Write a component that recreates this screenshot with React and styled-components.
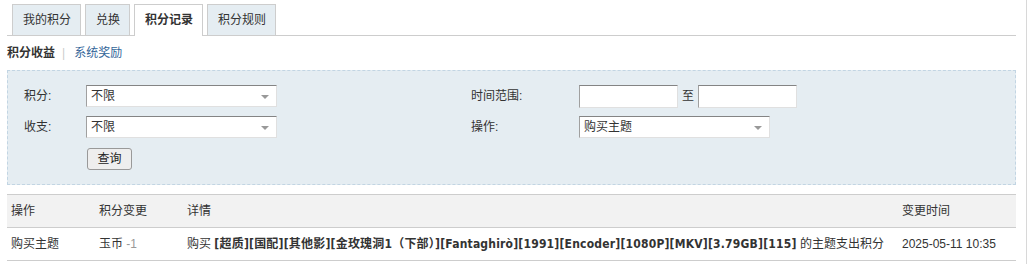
import React from "react";
import styled, { createGlobalStyle } from "styled-components";

const Global = createGlobalStyle`
  html, body { margin: 0; padding: 0; background: #fff; }
  body {
    font: 12px/1.5 "Liberation Sans", "Noto Sans CJK SC", sans-serif;
    color: #333;
  }
`;

const Page = styled.div`
  min-height: 264px;
  width: 1009px;
  padding: 0 10px 0 7px;
  border-right: 1px solid #d8d8d8;
`;

const TabBar = styled.ul`
  display: flex;
  gap: 4px;
  list-style: none;
  margin: 0;
  padding: 4px 0 0 5px;
  height: 31px;
  border-bottom: 1px solid #cdcdcd;
`;

const Tab = styled.li`
  line-height: 30px;
  padding: 0 9px 0 10px;
  border: 1px solid #cdcdcd;
  border-bottom: none;
  background: ${(p) => (p.$active ? "#fff" : "#e5edf2")};
  font-weight: ${(p) => (p.$active ? "bold" : "normal")};
  margin-bottom: ${(p) => (p.$active ? "-1px" : "0")};
  height: ${(p) => (p.$active ? "31px" : "30px")};
  color: #333;
  cursor: pointer;
`;

const SubNav = styled.div`
  display: flex;
  align-items: center;
  height: 18px;
  margin-top: 8px;
`;

const SubCurrent = styled.span`
  font-weight: bold;
  color: #333;
`;

const Pipe = styled.span`
  color: #ccc;
  margin: 0 9px 0 7px;
`;

const SubLink = styled.a`
  color: #336699;
  text-decoration: none;
`;

const FilterBox = styled.div`
  margin-top: 8px;
  background: #e5edf2;
  border: 1px dashed #c2d5e3;
  padding: 14px 0 14px 16px;
  display: grid;
  grid-template-columns: 62px 385px 108px 1fr;
  row-gap: 8px;
  align-items: start;
`;

const Label = styled.div`
  color: #333;
  line-height: 22px;
`;

const SelectBox = styled.div`
  position: relative;
  width: ${(p) => p.$w}px;
  height: 22px;
  line-height: 20px;
  box-sizing: border-box;
  background: #fff;
  border: 1px solid;
  border-color: #848484 #e0e0e0 #e0e0e0 #a0a0a0;
  padding-left: 4px;
  color: #333;
`;

const Arrow = styled.span`
  position: absolute;
  right: 7px;
  top: 9px;
  width: 0;
  height: 0;
  border-left: 4px solid transparent;
  border-right: 4px solid transparent;
  border-top: 4px solid #999;
`;

const DateRow = styled.div`
  display: flex;
  align-items: center;
  gap: 4px;
  line-height: 23px;
`;

const TextInput = styled.div`
  width: 99px;
  height: 23px;
  box-sizing: border-box;
  background: #fff;
  border: 1px solid;
  border-color: #848484 #e0e0e0 #e0e0e0 #a0a0a0;
`;

const Button = styled.button`
  grid-column: 2;
  justify-self: start;
  margin: 2px 0 0 1px;
  width: 45px;
  height: 22px;
  padding: 0;
  border: 1px solid #999;
  border-radius: 3px;
  background: #eee;
  font: 12px "Liberation Sans", "Noto Sans CJK SC", sans-serif;
  color: #222;
  line-height: 20px;
`;

const Table = styled.table`
  width: 100%;
  margin-top: 9px;
  border-collapse: collapse;
  table-layout: fixed;
`;

const HeadRow = styled.tr`
  background: #f2f2f2;
  border-top: 1px solid #cdcdcd;
  border-bottom: 1px solid #cdcdcd;
`;

const Th = styled.th`
  width: ${(p) => (p.$w ? `${p.$w}px` : "auto")};
  height: 32px;
  padding: 0 4px;
  text-align: left;
  font-weight: normal;
  color: #333;
`;

const BodyRow = styled.tr`
  border-bottom: 1px solid #cdcdcd;
`;

const Td = styled.td`
  height: 32px;
  padding: 0 4px;
  color: #333;
  white-space: nowrap;
`;

const Muted = styled.span`
  color: #999;
`;

const Strong = styled.strong`
  font-weight: bold;
  letter-spacing: 0.2px;
  font-family: "DejaVu Sans Condensed", "Liberation Sans", "Noto Sans CJK SC", sans-serif;
`;

export default function App() {
  return (
    <>
      <Global />
      <Page>
        <TabBar>
          <Tab>我的积分</Tab>
          <Tab>兑换</Tab>
          <Tab $active>积分记录</Tab>
          <Tab>积分规则</Tab>
        </TabBar>
        <SubNav>
          <SubCurrent>积分收益</SubCurrent>
          <Pipe>|</Pipe>
          <SubLink href="#">系统奖励</SubLink>
        </SubNav>
        <FilterBox>
          <Label>积分:</Label>
          <SelectBox $w={191}>
            不限
            <Arrow />
          </SelectBox>
          <Label>时间范围:</Label>
          <DateRow>
            <TextInput />
            <span>至</span>
            <TextInput />
          </DateRow>
          <Label>收支:</Label>
          <SelectBox $w={191}>
            不限
            <Arrow />
          </SelectBox>
          <Label>操作:</Label>
          <SelectBox $w={191}>
            购买主题
            <Arrow />
          </SelectBox>
          <Button>查询</Button>
        </FilterBox>
        <Table>
          <thead>
            <HeadRow>
              <Th $w={80}>操作</Th>
              <Th $w={80}>积分变更</Th>
              <Th $w={707}>详情</Th>
              <Th>变更时间</Th>
            </HeadRow>
          </thead>
          <tbody>
            <BodyRow>
              <Td>购买主题</Td>
              <Td>
                玉币 <Muted>-1</Muted>
              </Td>
              <Td>
                购买{" "}
                <Strong>
                  [超质][国配][其他影][金玫瑰洞1（下部）][Fantaghirò][1991][Encoder][1080P][MKV][3.79GB][115]
                </Strong>{" "}
                的主题支出积分
              </Td>
              <Td>2025-05-11 10:35</Td>
            </BodyRow>
          </tbody>
        </Table>
      </Page>
    </>
  );
}
